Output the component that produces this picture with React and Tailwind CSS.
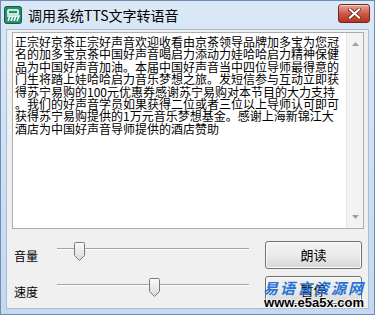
import React from "react";

const lines = [
  "正宗好京茶正宗好声音欢迎收看由京茶领导品牌加多宝为您冠",
  "名的加多宝京茶中国好声音喝启力添动力娃哈哈启力精神保健",
  "品为中国好声音加油。本届中国好声音当中四位导师最得意的",
  "门生将踏上娃哈哈启力音乐梦想之旅。发短信参与互动立即获",
  "得苏宁易购的100元优惠券感谢苏宁易购对本节目的大力支持",
  "。我们的好声音学员如果获得二位或者三位以上导师认可即可",
  "获得苏宁易购提供的1万元音乐梦想基金。感谢上海新锦江大",
  "酒店为中国好声音导师提供的酒店赞助",
];

function AppIcon() {
  return (
    <svg width="18" height="18" viewBox="0 0 18 18">
      <rect x="0.5" y="0.5" width="17" height="17" rx="2" fill="#1f9070" stroke="#0e5e47" />
      <path d="M4 4h10M4 4v4h10V4M3 10h12l-2 5M6 10l-2 5M9 10l-2 5M12 10l-2 5" stroke="#fff" strokeWidth="1.6" fill="none" />
    </svg>
  );
}

function CloseButton() {
  return (
    <div className="w-[32px] h-[19px] rounded-[3px] border border-[#6b2a22] bg-gradient-to-b from-[#e8a597] via-[#cf5a47] to-[#b3321f] flex items-center justify-center shadow-[inset_0_1px_0_rgba(255,255,255,0.5)]">
      <svg width="13" height="11" viewBox="0 0 13 11">
        <path d="M2 1.5l9 8M11 1.5l-9 8" stroke="#5a1a12" strokeWidth="3.6" strokeLinecap="square" />
        <path d="M2 1.5l9 8M11 1.5l-9 8" stroke="#fff" strokeWidth="2.2" strokeLinecap="square" />
      </svg>
    </div>
  );
}

function Slider({ pos }) {
  return (
    <div className="relative w-[192px] h-[19px]">
      <div className="absolute left-0 right-0 top-[6px] h-[2px] border-t border-[#a3a3a3] border-b border-b-[#ffffff] bg-[#e6e6e6]" />
      <svg className="absolute top-0" style={{ left: pos }} width="11" height="19" viewBox="0 0 11 19">
        <defs>
          <linearGradient id={`g${pos}`} x1="0" y1="0" x2="0" y2="1">
            <stop offset="0" stopColor="#fbfbfb" />
            <stop offset="1" stopColor="#d9d9d9" />
          </linearGradient>
        </defs>
        <path d="M1.5 0.5h8a1 1 0 0 1 1 1v12l-5 5-5-5v-12a1 1 0 0 1 1-1z" fill={`url(#g${pos})`} stroke="#7a7a7a" />
      </svg>
    </div>
  );
}

function Button({ children }) {
  return (
    <div className="w-[97px] h-[28px] rounded-[3px] border border-[#707070] bg-gradient-to-b from-[#f2f2f2] via-[#ebebeb] to-[#d6d6d6] flex items-center justify-center text-[13px] text-black shadow-[inset_0_0_0_1px_#fcfcfc]">
      {children}
    </div>
  );
}

export default function App() {
  return (
    <div className="relative w-[375px] h-[315px] overflow-hidden bg-gradient-to-b from-[#dbe8f6] to-[#c5d8ef] border border-[#6e8db5] font-['Noto_Sans_CJK_SC',sans-serif]">
      {/* title bar */}
      <div className="h-[28px] flex items-center pl-[3px] pr-[4px]">
        <AppIcon />
        <span className="ml-[6px] text-[14px] text-black leading-none">调用系统TTS文字转语音</span>
        <div className="ml-auto -mt-[4px]">
          <CloseButton />
        </div>
      </div>

      {/* client area */}
      <div className="mx-[5px] h-[280px] bg-[#f0f0f0] border border-[#a9bfd9] flex flex-col">
        {/* text box */}
        <div className="mt-[2px] ml-[5px] w-[352px] h-[197px] bg-white border border-[#abadb3] flex">
          <div className="flex-1 pl-[2px] pt-[3px] text-[12px] leading-[12.4px] text-black whitespace-nowrap overflow-hidden">
            {lines.map((l, i) => (
              <div key={i}>{l}</div>
            ))}
          </div>
          <div className="w-[17px] bg-[#f3f3f3] border-l border-[#e6e6e6] flex flex-col items-center justify-between py-[9px]">
            <svg width="7" height="4" viewBox="0 0 7 4"><path d="M0 4L3.5 0L7 4z" fill="#a0a0a0" /></svg>
            <svg width="7" height="4" viewBox="0 0 7 4"><path d="M0 0L3.5 4L7 0z" fill="#a0a0a0" /></svg>
          </div>
        </div>

        {/* controls */}
        <div className="flex mt-[12px] ml-[7px]">
          <div className="flex flex-col gap-[16px] pt-[1px]">
            <div className="flex items-start">
              <span className="w-[43px] text-[12px] leading-none mt-[8px] text-black">音量</span>
              <Slider pos={17} />
            </div>
            <div className="flex items-start">
              <span className="w-[43px] text-[12px] leading-none mt-[8px] text-black">速度</span>
              <Slider pos={92} />
            </div>
          </div>
          <div className="ml-auto mr-[6px] flex flex-col gap-[7px]">
            <Button>朗读</Button>
            <Button>暂停</Button>
          </div>
        </div>
      </div>

      {/* watermark */}
      <div className="absolute left-[262px] top-[279px] w-[102px] flex flex-col items-center pointer-events-none">
        <div className="text-[15px] leading-[16px] font-bold tracking-[2px] text-[#2b74d6] italic">易语言资源网</div>
        <div className="text-[13px] leading-[13px] font-bold text-black font-['Liberation_Sans',sans-serif] [text-shadow:0_0_2px_#fff,0_0_2px_#fff,0_0_2px_#fff]">
          www.e5a5x.com
        </div>
      </div>
    </div>
  );
}
